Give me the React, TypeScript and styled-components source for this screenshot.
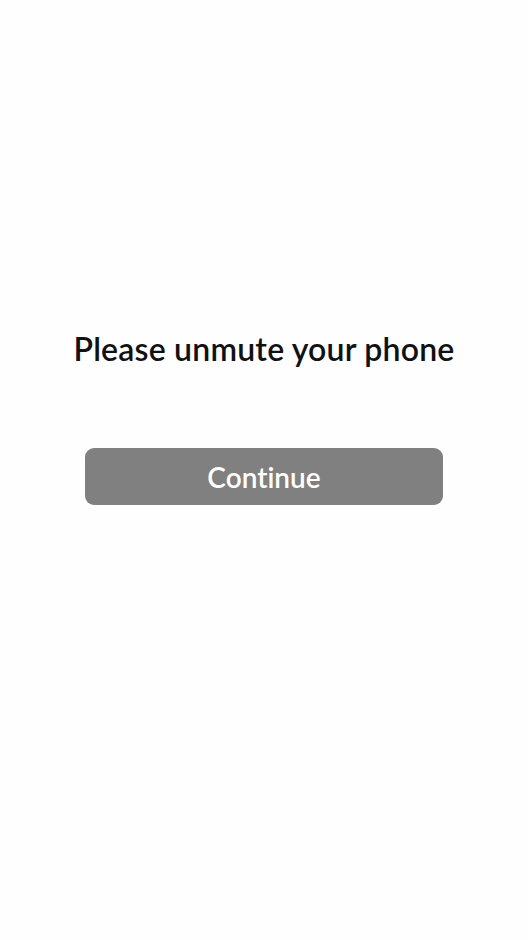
import * as React from "react";
import styled, {createGlobalStyle} from "styled-components";

const GlobalStyle = createGlobalStyle`
  html, body {
    margin: 0;
    padding: 0;
    background: #fefefe;
  }
  body {
    font-family: Lato, "Noto Sans", sans-serif;
    font-variant-ligatures: none;
  }
`

const Screen = styled.div`
  width: 528px;
  height: 940px;
  display: flex;
  flex-direction: column;
  align-items: center;
  padding-top: 328px;
  box-sizing: border-box;
`

const Title = styled.h1`
  margin: 0;
  font-size: 32px;
  line-height: 42px;
  font-weight: 600;
  color: #111;
  letter-spacing: 0.2px;
`

const Button = styled.button`
  margin-top: 78px;
  width: 358px;
  height: 57px;
  border: none;
  border-radius: 9px;
  background: #808080;
  color: #fff;
  font-family: inherit;
  font-variant-ligatures: none;
  font-size: 28px;
  font-weight: 600;
  padding: 0;
  cursor: pointer;
`

function App() {
    return (
        <Screen>
            <GlobalStyle/>
            <Title>Please unmute your phone</Title>
            <Button>Continue</Button>
        </Screen>
    );
}

export default App;
